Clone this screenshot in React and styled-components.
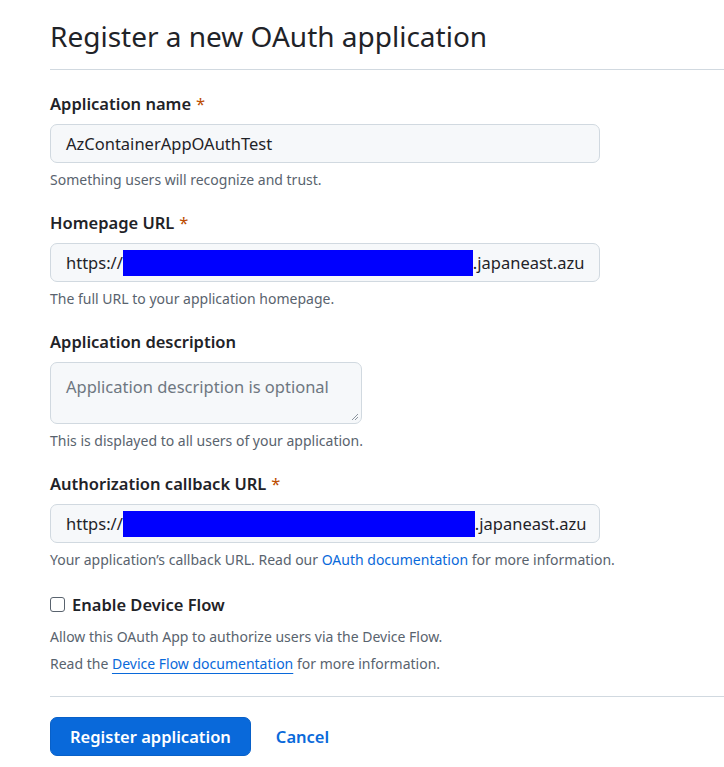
import React from 'react'
import styled, { createGlobalStyle } from 'styled-components'

const GlobalStyle = createGlobalStyle`
    html, body {
        margin: 0;
        padding: 0;
        background: #ffffff;
        overflow: hidden;
    }

    body {
        font-family: "Noto Sans", "Open Sans", sans-serif;
        color: #1f2328;
    }
`

const Page = styled.main`
    box-sizing: border-box;
    width: 724px;
    padding: 16px 0 0 50px;
`

const Heading = styled.h1`
    margin: 0 0 21px;
    padding-bottom: 12px;
    font-size: 28px;
    font-weight: 400;
    line-height: 41px;
    border-bottom: 1px solid #d1d9e0;
`

const Group = styled.div`
    margin-bottom: 20px;
`

const Label = styled.label`
    display: block;
    margin-bottom: 8px;
    font-size: 16.5px;
    font-weight: 600;
    line-height: 25px;
`

const Required = styled.span`
    color: #bc4c00;
    font-weight: 400;
    margin-left: 5px;
`

const Field = styled.div`
    box-sizing: border-box;
    width: ${props => props.$width || 550}px;
    height: ${props => props.$height || 39}px;
    padding: ${props => (props.$multiline ? '12px 15px' : '0 15px')};
    display: flex;
    align-items: ${props => (props.$multiline ? 'flex-start' : 'center')};
    background: #f6f8fa;
    border: 1px solid #d1d9e0;
    border-radius: 7px;
    font-size: 16.5px;
    line-height: 24px;
    white-space: nowrap;
    overflow: hidden;
    position: relative;
    color: ${props => (props.$placeholder ? '#6e7781' : '#1f2328')};
`

const Redacted = styled.span`
    display: inline-block;
    width: ${props => props.$width}px;
    height: 26px;
    background: #0000ff;
    flex-shrink: 0;
`

const Grip = styled.svg`
    position: absolute;
    right: 2px;
    bottom: 2px;
`

const Help = styled.p`
    margin: 7px 0 0;
    font-size: 14px;
    line-height: 20px;
    color: #59636e;
`

const Link = styled.a`
    color: #0969da;
    text-decoration: ${props => (props.$underline ? 'underline' : 'none')};
    text-underline-offset: 4px;
`

const CheckRow = styled.label`
    display: flex;
    align-items: center;
    gap: 7px;
    margin-top: 22px;
    font-size: 16.5px;
    font-weight: 600;
    line-height: 25px;
`

const Box = styled.span`
    box-sizing: border-box;
    width: 15px;
    height: 15px;
    border: 1px solid #59636e;
    border-radius: 3px;
    background: #ffffff;
`

const Note = styled.p`
    margin: ${props => (props.$first ? '10px' : '7px')} 0 0;
    font-size: 14px;
    line-height: 20px;
    color: #59636e;
`

const Divider = styled.hr`
    margin: 22px 0 20px;
    border: 0;
    border-top: 1px solid #d1d9e0;
`

const Actions = styled.div`
    display: flex;
    align-items: center;
    gap: 25px;
`

const Primary = styled.button`
    height: 39px;
    padding: 0 19px;
    background: #0969da;
    color: #ffffff;
    border: 1px solid #0860c8;
    border-radius: 7px;
    font-family: inherit;
    font-size: 16.5px;
    font-weight: 600;
`

const Cancel = styled.a`
    color: #0969da;
    font-size: 16.5px;
    font-weight: 600;
`

const ResizeGrip = () => (
    <Grip width="8" height="8" viewBox="0 0 8 8">
        <path d="M7 1L1 7M7 4L4 7" stroke="#8c959f" strokeWidth="1" />
    </Grip>
)

const App = () => {
    return (
        <Page>
            <GlobalStyle />
            <Heading>Register a new OAuth application</Heading>

            <Group>
                <Label>
                    Application name<Required>*</Required>
                </Label>
                <Field>AzContainerAppOAuthTest</Field>
                <Help>Something users will recognize and trust.</Help>
            </Group>

            <Group>
                <Label>
                    Homepage URL<Required>*</Required>
                </Label>
                <Field>
                    https://<Redacted $width={350} />.japaneast.azu
                </Field>
                <Help>The full URL to your application homepage.</Help>
            </Group>

            <Group>
                <Label>Application description</Label>
                <Field $width={312} $height={62} $multiline $placeholder>
                    Application description is optional
                    <ResizeGrip />
                </Field>
                <Help>This is displayed to all users of your application.</Help>
            </Group>

            <Group>
                <Label>
                    Authorization callback URL<Required>*</Required>
                </Label>
                <Field>
                    https://<Redacted $width={352} />.japaneast.azu
                </Field>
                <Help>
                    Your application’s callback URL. Read our{' '}
                    <Link>OAuth documentation</Link> for more information.
                </Help>
            </Group>

            <CheckRow>
                <Box />
                Enable Device Flow
            </CheckRow>
            <Note $first>Allow this OAuth App to authorize users via the Device Flow.</Note>
            <Note>
                Read the <Link $underline>Device Flow documentation</Link> for more
                information.
            </Note>

            <Divider />

            <Actions>
                <Primary>Register application</Primary>
                <Cancel>Cancel</Cancel>
            </Actions>
        </Page>
    )
}

export default App
